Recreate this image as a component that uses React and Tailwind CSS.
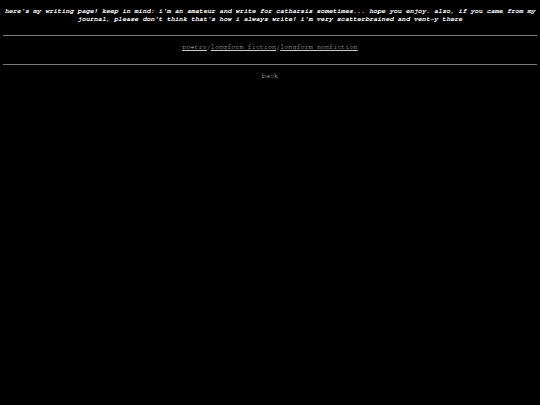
export default function App() {
  const mono = { fontFamily: '"Nimbus Mono PS", "FreeMono", Courier, "Liberation Mono", monospace' };
  return (
    <div className="min-h-[405px] bg-black px-[3px] pt-[7px]" style={mono}>
      <p className="text-center text-[6.75px] leading-[8px] font-bold italic text-white">
        here's my writing page! keep in mind: i'm an amateur and write for catharsis sometimes... hope you enjoy. also, if you came from my journal, please don't think that's how i always write! i'm very scatterbrained and vent-y there
      </p>
      <hr className="mt-[12px] border-t-[1px] border-[#777]" />
      <div className="mt-[7px] text-center text-[6.8px] leading-[8px] text-[#ccc]">
        <a href="#" className="underline">poetry</a>/<a href="#" className="underline">longform fiction</a>/<a href="#" className="underline">longform nonfiction</a>
      </div>
      <hr className="mt-[13px] border-t-[1px] border-[#777]" />
      <div className="mt-[7px] text-center text-[6.8px] leading-[8px] text-[#ccc]">
        <a href="#">back</a>
      </div>
    </div>
  );
}
